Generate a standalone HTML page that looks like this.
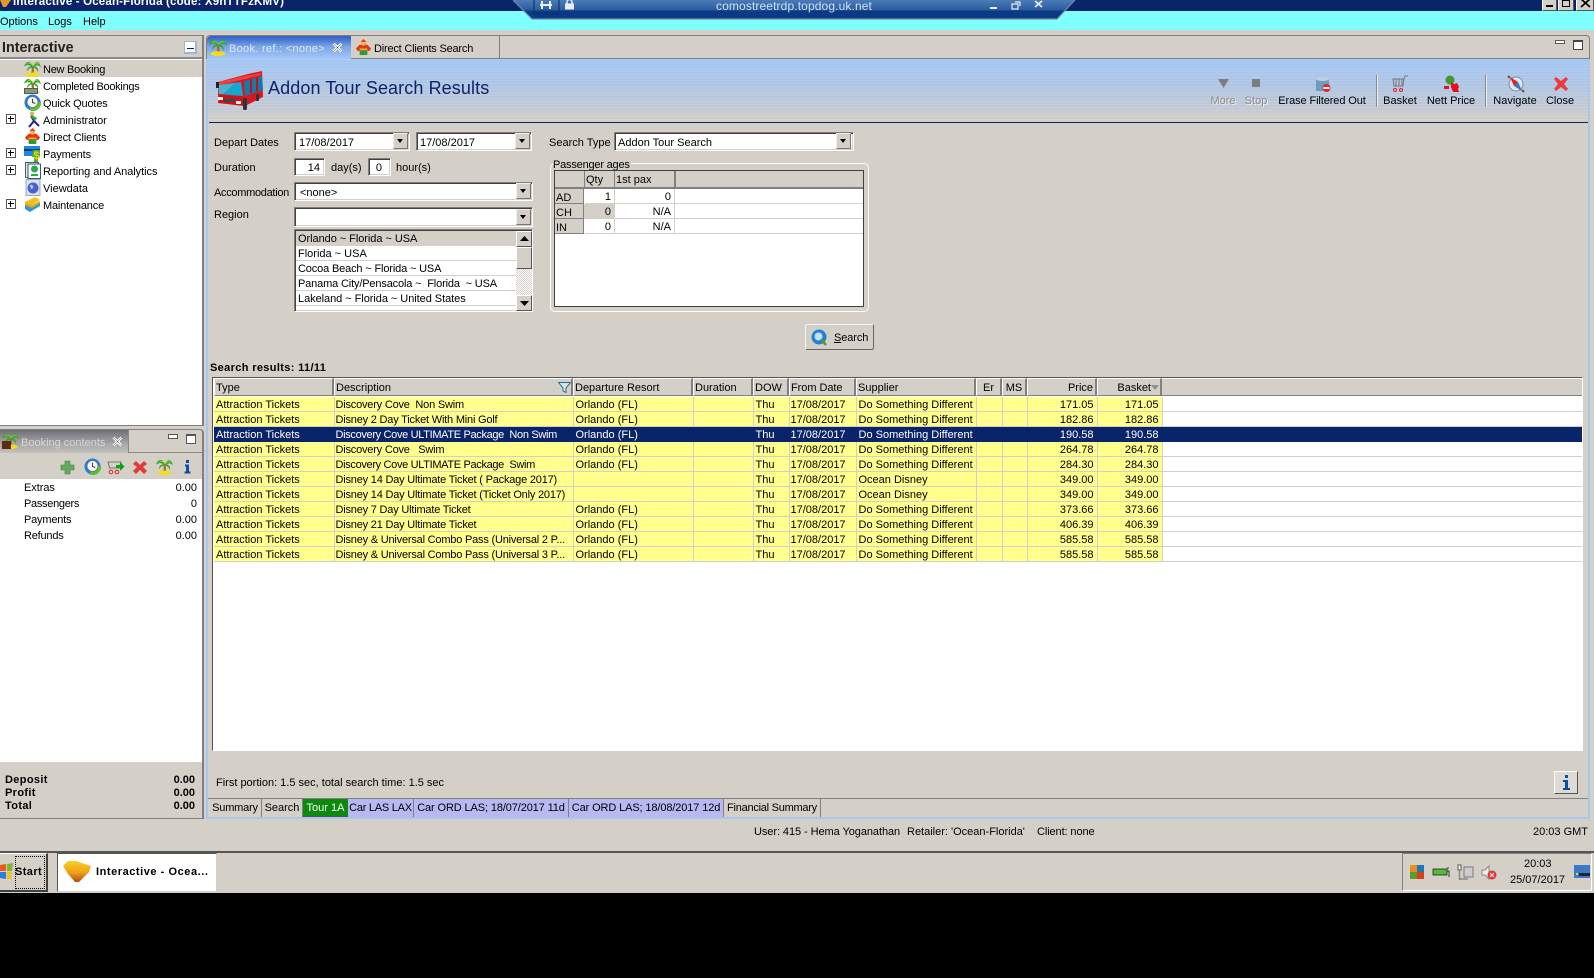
<!DOCTYPE html>
<html><head><meta charset="utf-8"><title>Interactive</title>
<style>
html,body{margin:0;padding:0;width:1594px;height:978px;overflow:hidden;background:#000}
body{position:relative;font:11px/14px "Liberation Sans",Arial,sans-serif;color:#000}
div,span,svg,table{box-sizing:border-box}
.a,.t,svg.i{position:absolute}
.t{white-space:nowrap;line-height:14px;margin-top:1px}
.in{position:absolute;background:#fff;border:1px solid;border-color:#808080 #fff #fff #808080;box-shadow:inset 1px 1px 0 #404040,inset -1px -1px 0 #d4d0c8}
.up{position:absolute;background:#d4d0c8;border:1px solid;border-color:#fff #555 #555 #fff}
.dd{position:absolute;width:15px;background:#d4d0c8;border:1px solid;border-color:#eee #777 #777 #eee}
.dd:after{content:"";position:absolute;left:3px;top:5px;border:3px solid transparent;border-top:4px solid #000;border-bottom:0}
.pl{position:absolute;left:6px;width:10px;height:10px;border:1px solid #555;background:#fff}
.pl:before{content:"";position:absolute;left:1px;top:3px;width:6px;height:1px;background:#000}
.pl:after{content:"";position:absolute;left:3px;top:1px;width:1px;height:6px;background:#000}
table{position:absolute;border-collapse:collapse;table-layout:fixed}
td{padding:2px 3px 0 2px;height:12px;line-height:12px;white-space:nowrap;overflow:hidden;border-right:1px solid #d4d0c8;border-bottom:1px solid #d4d0c8;background:#ffff8e}
td.r{text-align:right}
td.w{background:#fff;border-right:0}
td:nth-child(2){padding-left:1px;letter-spacing:-.2px}
td:nth-child(6){padding-left:1px}
td.u{letter-spacing:-.33px}
tr.s td{background:#0a246a;color:#fff;border-color:#0a246a}
.h{position:absolute;top:378px;height:18px;background:#d4d0c8;border-left:1px solid #fff;border-top:1px solid #fff;border-right:2px solid #808080;border-bottom:1px solid #808080;line-height:19px;padding-left:1px;white-space:nowrap}
.tab{position:absolute;top:799px;height:18px;line-height:19px;text-align:center;border-right:1px solid #808080;white-space:nowrap}
.tb{position:absolute;top:94px;text-align:center;transform:translateX(-50%);white-space:nowrap;line-height:14px}
</style></head><body>
<svg width="0" height="0" style="position:absolute"><defs>
<symbol id="palm" viewBox="0 0 18 18"><path d="M7.500 7C8.500 10 8.500 12 7 15L11 15C10.500 12 10.500 9 10.500 7Z" fill="#a9701e"/><path d="M9.500 7C6.500 0 2 1 0 7C3 5 5 5 7.500 6.500C5 7 3 9 3 12C5 9 7 8 9.500 7.500C11.500 8.500 14 10 15 13C15.500 9 13.500 7.500 11.500 6.500C14 5 16 5.500 18 8C16.500 1 12 0 9.500 7Z" fill="#3aa52a"/><path d="M9.500 6C7 3 5 3 3 4.500M10 6C12 3 14 3 15.500 4.500" stroke="#8fd040" fill="none" stroke-width=".8"/><ellipse cx="9" cy="15.600" rx="7.500" ry="2.300" fill="#f6dc14"/></symbol>
<symbol id="clock" viewBox="0 0 18 18"><circle cx="9" cy="9" r="8.500" fill="#1e82dc"/><path d="M7 18A9 9 0 0 0 18 8L14 9L13 12L9 14L6 13Z" fill="#5cc02e"/><circle cx="9" cy="8.500" r="5.800" fill="#f4f4f4" stroke="#667" stroke-width=".7"/><path d="M9 5V9L12 10" stroke="#333" fill="none"/></symbol>
<symbol id="gift" viewBox="0 0 18 18"><path d="M5 6H13L17 10L15 13L13 12V16H5V12L3 13L1 10Z" fill="#e8361a"/><circle cx="9" cy="4" r="3" fill="#f4b45c"/><path d="M6 3L9 0L12 3Z" fill="#e8361a"/><rect x="5" y="10" width="8" height="2" fill="#f5a623"/><rect x="5" y="12" width="8" height="5" fill="#2a9a3c"/></symbol>
</defs></svg>

<!-- Desktop background -->
<div class="a" style="left:0;top:0;width:1594px;height:893px;background:#d4d0c8"></div>
<div class="a" style="left:0;top:0;width:1594px;height:11px;background:#0a246a"></div>
<div class="a" style="left:0;top:11px;width:1594px;height:19px;background:#80ffff"></div>
<svg class="i" style="left:0;top:0" width="13" height="8" viewBox="0 0 13 8"><path d="M0 0H11L6 7H3Z" fill="#e8962a"/></svg>
<div class="t" style="left:13px;top:-6px;color:#fff;font-weight:bold;font-size:11.500px;letter-spacing:.17px">Interactive - Ocean-Florida (code: X9hTTFzKMV)</div>

<!-- RDP bar -->
<svg class="i" style="left:513px;top:0" width="563" height="20" viewBox="0 0 563 20"><defs><linearGradient id="rg" x1="0" y1="0" x2="0" y2="1"><stop offset="0" stop-color="#4a7cb8"/><stop offset=".55" stop-color="#2a5a9c"/><stop offset=".56" stop-color="#0b3a85"/><stop offset="1" stop-color="#0b3a85"/></linearGradient></defs><path d="M0 0H562L544 19H19Z" fill="url(#rg)"/><path d="M0 0L19 19H544L562 0" fill="none" stroke="#6f8ba8" stroke-width="1.200"/><rect x="21" y="-3" width="25" height="17" rx="3" fill="none" stroke="#0a2c60"/><path d="M27 5H39M29 1V9M37 1V9" stroke="#e8eef6" stroke-width="2" fill="none"/><rect x="52" y="3.500" width="9" height="6" fill="#e8eef6"/><path d="M54 4V2A2.500 2.500 0 0 1 59 2V4" stroke="#e8eef6" stroke-width="1.500" fill="none"/><rect x="477" y="7" width="7" height="2" fill="#e8eef6"/><path d="M499 4h6v5h-6zM502 2h5v4" fill="none" stroke="#e8eef6" stroke-width="1.200"/><path d="M522 1L529 7M529 1L522 7" stroke="#e8eef6" stroke-width="1.800"/></svg>
<div class="t" style="left:716px;top:-2px;color:#cfe0f2;font-size:12px;letter-spacing:.12px">comostreetrdp.topdog.uk.net</div>

<!-- Window buttons -->
<div class="up" style="left:1542px;top:-4px;width:15px;height:15px"><div class="a" style="left:3px;top:8px;width:7px;height:2px;background:#000"></div></div>
<div class="up" style="left:1558px;top:-4px;width:16px;height:15px"><div class="a" style="left:3px;top:3px;width:8px;height:7px;border:1px solid #000"></div></div>
<div class="up" style="left:1576px;top:-4px;width:18px;height:15px"><svg class="i" style="left:3px;top:2px" width="11" height="9"><path d="M1 0L10 8M10 0L1 8" stroke="#000" stroke-width="1.700"/></svg></div>

<!-- Menu -->
<div class="t" style="left:0;top:14px">Options</div>
<div class="t" style="left:48px;top:14px">Logs</div>
<div class="t" style="left:83px;top:14px">Help</div>

<!-- Left nav panel -->
<div class="a" style="left:0;top:35px;width:204px;height:391px;border-top:1px solid #808080;border-right:2px solid #808080;border-bottom:1px solid #808080;background:#fff"></div>
<div class="a" style="left:0;top:36px;width:202px;height:23px;background:#d4d0c8;border-bottom:2px solid #8a8a8a"></div>
<div class="t" style="left:2px;top:40px;font-size:14.300px;font-weight:bold;color:#222">Interactive</div>
<div class="a" style="left:184px;top:41px;width:13px;height:13px;background:#fff;border:2px solid #9cb4d8;border-width:1px 2px 2px 1px"></div>
<div class="a" style="left:187px;top:48px;width:7px;height:1px;background:#0a246a"></div>
<div class="a" style="left:0;top:60px;width:202px;height:17px;background:#d4d0c8"></div>
<svg class="i" style="left:24px;top:60px" width="17" height="17"><use href="#palm"/></svg>
<svg class="i" style="left:24px;top:77px" width="17" height="17"><use href="#palm"/></svg>
<div class="a" style="left:24px;top:88px;width:14px;height:6px;background:#8a9a70;border:1px solid #556"></div>
<svg class="i" style="left:24px;top:94px" width="17" height="17"><use href="#clock"/></svg>
<svg class="i" style="left:26px;top:111px" width="15" height="17" viewBox="0 0 15 17"><circle cx="6" cy="2.500" r="2" fill="#e8a860"/><path d="M5 5L8 10L3 16M8 10L13 15" stroke="#20209a" stroke-width="2" fill="none"/><path d="M4 5L9 10L11 7L6 4Z" fill="#3aa83a"/></svg>
<svg class="i" style="left:24px;top:128px" width="17" height="17"><use href="#gift"/></svg>
<svg class="i" style="left:24px;top:145px" width="17" height="17" viewBox="0 0 17 17"><rect x="0" y="1" width="16" height="10" fill="#1f86e0"/><rect x="0" y="4" width="16" height="2" fill="#0c3a80"/><path d="M9 5h7v7h-2v5h-4v-5H8z" fill="#48b02c"/><text x="9.500" y="14" font-size="11" font-weight="bold" fill="#f0d020" font-family="Liberation Sans">$</text></svg>
<svg class="i" style="left:25px;top:162px" width="16" height="17" viewBox="0 0 16 17"><rect x=".5" y="0.500" width="13" height="15" fill="#dfe8e8" stroke="#3a6a6a"/><rect x="3" y="2" width="12.500" height="14.500" fill="#fff" stroke="#3a5a6a"/><circle cx="9.500" cy="7" r="3.500" fill="#2ea84a"/><rect x="6" y="12" width="7" height="2" fill="#2ea84a"/></svg>
<svg class="i" style="left:25px;top:179px" width="16" height="17" viewBox="0 0 16 17"><rect x="1" y="0.500" width="14" height="16" fill="#dde2ee" stroke="#9ab"/><circle cx="8" cy="9" r="5.500" fill="#4a60d0"/><path d="M5 6C7 5 9 7 8 9S5 10 5 6Z" fill="#a0d0f0"/></svg>
<svg class="i" style="left:24px;top:196px" width="17" height="17" viewBox="0 0 17 17"><path d="M1 9L9 11L16 6V10L6 16L1 13Z" fill="#2a9ae0"/><path d="M1 6L11 1L16 4L8 9Z" fill="#f4c020"/><path d="M1 9L8 12L16 7V5L8 9L1 6Z" fill="#e8a810"/></svg>
<div class="t" style="left:43px;top:62px;letter-spacing:-.25px">New Booking</div>
<div class="t" style="left:43px;top:79px;letter-spacing:-.28px">Completed Bookings</div>
<div class="t" style="left:43px;top:96px;letter-spacing:-.17px">Quick Quotes</div>
<div class="t" style="left:43px;top:113px;letter-spacing:-.08px">Administrator</div>
<div class="t" style="left:43px;top:130px;letter-spacing:-.15px">Direct Clients</div>
<div class="t" style="left:43px;top:147px;letter-spacing:-.12px">Payments</div>
<div class="t" style="left:43px;top:164px;letter-spacing:-.05px">Reporting and Analytics</div>
<div class="t" style="left:43px;top:181px">Viewdata</div>
<div class="t" style="left:43px;top:198px;letter-spacing:-.18px">Maintenance</div>
<div class="pl" style="top:114px"></div><div class="pl" style="top:148px"></div><div class="pl" style="top:165px"></div><div class="pl" style="top:199px"></div>

<!-- Booking contents panel -->
<div class="a" style="left:0;top:429px;width:204px;height:390px;border-top:1px solid #808080;border-right:2px solid #808080;border-bottom:1px solid #808080;border-radius:0 4px 0 0"></div>
<div class="a" style="left:0;top:430px;width:129px;height:23px;background:linear-gradient(#6f6f78,#a8a6a6 60%,#c4c2be);border-right:1px solid #888"></div>
<div class="a" style="left:129px;top:452px;width:73px;height:1px;background:#888"></div>
<svg class="i" style="left:2px;top:432px" width="17" height="17"><use href="#palm"/></svg>
<div class="a" style="left:2px;top:441px;width:9px;height:8px;background:#5a2c10"></div>
<div class="t" style="left:21px;top:435px;color:#d8d8d8">Booking contents</div>
<svg class="i" style="left:112px;top:436px" width="11" height="11"><path d="M1.500 1.500L9.500 9.500M9.500 1.500L1.500 9.500" stroke="#fff" stroke-width="2.600"/><path d="M1.500 1.500L9.500 9.500M9.500 1.500L1.500 9.500" stroke="#444" stroke-width=".5"/></svg>
<div class="a" style="left:168px;top:434px;width:10px;height:5px;background:#fff;border:1px solid #555"></div>
<div class="a" style="left:186px;top:434px;width:10px;height:10px;background:#fff;border:1px solid #555;border-top-width:2px"></div>
<div class="a" style="left:0;top:479px;width:202px;height:283px;background:#fff"></div>
<svg class="i" style="left:0;top:456px" width="202" height="22" viewBox="0 0 202 22"><path d="M65 5h5v4h4v5h-4v4h-5v-4h-4v-5h4z" fill="#68a860" stroke="#3f8040" stroke-width=".6"/><use href="#clock" x="84" y="2" width="17" height="17"/><path d="M108 6h13l-1.500 6h-10z" fill="none" stroke="#777"/><circle cx="111" cy="16" r="1.800" fill="none" stroke="#d22"/><circle cx="117" cy="16" r="1.800" fill="none" stroke="#d22"/><path d="M116 9h4v-3l4.500 4.500-4.500 4.500v-3h-4z" fill="#12a012"/><path d="M136 5l4 4 4-4 3 3-4 3 4 4-3 3-4-4-4 4-3-3 4-4-4-3z" fill="#e03a3a"/><use href="#palm" x="156" y="2" width="17" height="17"/><path d="M186 4h3v3h-3zM185 8.500h4v7h1.500v2h-6v-2h1.500v-5h-1z" fill="#0a50a0"/></svg>
<div class="t" style="left:24px;top:480px;letter-spacing:-.05px">Extras</div><div class="t" style="right:1397px;top:480px">0.00</div>
<div class="t" style="left:24px;top:496px;letter-spacing:-.3px">Passengers</div><div class="t" style="right:1397px;top:496px">0</div>
<div class="t" style="left:24px;top:512px;letter-spacing:-.2px">Payments</div><div class="t" style="right:1397px;top:512px">0.00</div>
<div class="t" style="left:24px;top:528px;letter-spacing:-.2px">Refunds</div><div class="t" style="right:1397px;top:528px">0.00</div>
<div class="t" style="left:5px;top:772px;font-weight:bold;letter-spacing:.35px">Deposit</div><div class="t" style="right:1399px;top:772px;font-weight:bold">0.00</div>
<div class="t" style="left:5px;top:785px;font-weight:bold;letter-spacing:.35px">Profit</div><div class="t" style="right:1399px;top:785px;font-weight:bold">0.00</div>
<div class="t" style="left:5px;top:798px;font-weight:bold;letter-spacing:.35px">Total</div><div class="t" style="right:1399px;top:798px;font-weight:bold">0.00</div>

<!-- Main panel -->
<div class="a" style="left:206px;top:35px;width:1384px;height:24px;border-top:1px solid #808080;border-right:1px solid #808080;border-left:1px solid #808080;border-bottom:1px solid #808080;border-radius:4px 4px 0 0"></div>
<div class="a" style="left:206px;top:59px;width:1384px;height:760px;border:2px solid #a6c8f0;border-top:0"></div>
<div class="a" style="left:207px;top:36px;width:144px;height:24px;background:linear-gradient(#2e5cc4,#7aa6ea 45%,#a8caf6);border-radius:4px 0 0 0"></div>
<svg class="i" style="left:209px;top:38px" width="18" height="18"><use href="#palm"/></svg>
<div class="t" style="left:229px;top:41px;color:#dce8f8;letter-spacing:.3px">Book. ref.: &lt;none&gt;</div>
<svg class="i" style="left:332px;top:42px" width="11" height="11"><path d="M1.500 1.500L9.500 9.500M9.500 1.500L1.500 9.500" stroke="#fff" stroke-width="2.600"/><path d="M1.500 1.500L9.500 9.500M9.500 1.500L1.500 9.500" stroke="#444" stroke-width=".5"/></svg>
<svg class="i" style="left:355px;top:39px" width="17" height="17"><use href="#gift"/></svg>
<div class="t" style="left:374px;top:41px;letter-spacing:-.2px">Direct Clients Search</div>
<div class="a" style="left:499px;top:36px;width:1px;height:23px;background:#808080"></div>
<div class="a" style="left:1555px;top:40px;width:10px;height:4px;background:#fff;border:1px solid #555"></div>
<div class="a" style="left:1573px;top:40px;width:10px;height:10px;background:#fff;border:1px solid #444;border-top-width:2px"></div>

<!-- Banner -->
<div class="a" style="left:208px;top:59px;width:1380px;height:63px;background:repeating-linear-gradient(rgba(255,255,255,.05) 0 1px,rgba(0,0,0,.015) 1px 3px),linear-gradient(#a6caf8,#b2c8e8 40%,#c4ccd8 75%,#d6d0ca)"></div>
<div class="a" style="left:209px;top:122px;width:1379px;height:1px;background:#0a246a"></div>
<svg class="i" style="left:215px;top:70px" width="49" height="41" viewBox="0 0 49 41"><path d="M3 12L33 4L47 1L48 27L30 36L3 29Z" fill="#d8181e"/><path d="M4 12L30 6L46 3L46 5L30 9L4 15Z" fill="#f04040"/><path d="M3 15L26 12L28 26L4 24Z" fill="#14a8d0"/><path d="M3 15L20 13L8 24L4 24Z" fill="#50b0c8"/><path d="M29 11L47 6L48 20L30 26Z" fill="#1878a8"/><path d="M36 9v14M42 7v14" stroke="#c01418" stroke-width="2"/><path d="M4 25L28 27L29 36L3 33Z" fill="#c81418"/><rect x="3" y="27" width="5" height="3" fill="#eee"/><rect x="21" y="31" width="5" height="3" fill="#eee"/><rect x="9" y="29" width="11" height="3" fill="#444"/><rect x="28" y="28" width="4" height="12" rx="1.500" fill="#333"/><rect x="41" y="24" width="3" height="7" rx="1" fill="#333"/><rect x="1" y="12" width="3" height="6" fill="#222"/></svg>
<div class="t" style="left:268px;top:79px;height:16px;line-height:16px;font-size:18px;color:#0a246a;letter-spacing:.1px">Addon Tour Search Results</div>

<!-- Toolbar -->
<svg class="i" style="left:1210px;top:73px" width="370" height="20" viewBox="1210 73 370 20"><path d="M1218 79h11l-5.500 9z" fill="#7d7d7d"/><rect x="1252" y="79" width="8" height="8" fill="#7d7d7d"/><path d="M1316 79h13v12h-13z" fill="#6c9cc0"/><ellipse cx="1322.500" cy="79" rx="6.500" ry="2" fill="#c0d0dc"/><circle cx="1326.500" cy="88" r="4" fill="#e22"/><rect x="1323.500" y="87" width="6" height="2" fill="#fff"/><path d="M1393 79h11l-1 7h-9zM1404 79l1-3h3" fill="none" stroke="#777"/><path d="M1396 79v7M1399 79v7M1402 79v7" stroke="#777"/><circle cx="1395" cy="90" r="1.500" fill="none" stroke="#d22"/><circle cx="1401" cy="90" r="1.500" fill="none" stroke="#d22"/><circle cx="1450" cy="80" r="4.500" fill="#3e9a2a"/><path d="M1444 86h5v3h-5zM1451 82l3 2 3-1 2 4-1 2 1 3h-6l-2-5z" fill="#e8101c"/><circle cx="1516" cy="84" r="7" fill="#dde8f4" stroke="#889"/><path d="M1510 77L1518 82L1514 86Z" fill="#d22"/><path d="M1522 91L1514 86L1518 82Z" fill="#3a70c0"/><path d="M1508 76l2 2M1522 90l2 2" stroke="#654" stroke-width="2"/><path d="M1554 79l2-2 5 4 5-4 2 2-4 5 4 5-2 2-5-4-5 4-2-2 4-5z" fill="#ee3a3a"/></svg>
<div class="a" style="left:1376px;top:75px;width:1px;height:32px;background:#8a8a8a;box-shadow:1px 0 0 #eee"></div>
<div class="a" style="left:1485px;top:75px;width:1px;height:32px;background:#8a8a8a;box-shadow:1px 0 0 #eee"></div>
<div class="tb" style="left:1223px;color:#8a8a8a;text-shadow:1px 1px 0 #f0f0f0">More</div>
<div class="tb" style="left:1256px;color:#8a8a8a;text-shadow:1px 1px 0 #f0f0f0">Stop</div>
<div class="tb" style="left:1322px;letter-spacing:-.1px">Erase Filtered Out</div>
<div class="tb" style="left:1400px">Basket</div>
<div class="tb" style="left:1451px">Nett Price</div>
<div class="tb" style="left:1515px">Navigate</div>
<div class="tb" style="left:1560px">Close</div>

<!-- Form -->
<div class="t" style="left:214px;top:135px">Depart Dates</div>
<div class="in" style="left:294px;top:132px;width:116px;height:19px"></div><div class="t" style="left:299px;top:135px">17/08/2017</div><div class="dd" style="left:393px;top:133px;height:16px"></div>
<div class="in" style="left:416px;top:132px;width:116px;height:19px"></div><div class="t" style="left:420px;top:135px">17/08/2017</div><div class="dd" style="left:515px;top:133px;height:16px"></div>
<div class="t" style="left:214px;top:160px">Duration</div>
<div class="in" style="left:294px;top:158px;width:31px;height:18px"></div><div class="t" style="right:1274px;top:160px">14</div>
<div class="t" style="left:331px;top:160px">day(s)</div>
<div class="in" style="left:368px;top:158px;width:23px;height:18px"></div><div class="t" style="right:1212px;top:160px">0</div>
<div class="t" style="left:396px;top:160px">hour(s)</div>
<div class="t" style="left:214px;top:185px;letter-spacing:-.3px">Accommodation</div>
<div class="in" style="left:294px;top:182px;width:239px;height:19px"></div><div class="t" style="left:300px;top:185px">&lt;none&gt;</div><div class="dd" style="left:516px;top:183px;height:16px"></div>
<div class="t" style="left:214px;top:207px">Region</div>
<div class="in" style="left:294px;top:207px;width:239px;height:20px"></div><div class="dd" style="left:516px;top:209px;height:16px"></div>
<div class="in" style="left:294px;top:229px;width:239px;height:83px;overflow:hidden"></div>
<div class="a" style="left:296px;top:231px;width:220px;height:15px;background:#d4d0c8"></div>
<div class="a" style="left:296px;top:260px;width:220px;height:1px;background:#d4d0c8"></div>
<div class="a" style="left:296px;top:275px;width:220px;height:1px;background:#d4d0c8"></div>
<div class="a" style="left:296px;top:290px;width:220px;height:1px;background:#d4d0c8"></div>
<div class="a" style="left:296px;top:305px;width:220px;height:1px;background:#d4d0c8"></div>
<div class="t" style="left:298px;top:231px;letter-spacing:-.05px">Orlando ~ Florida ~ USA</div>
<div class="t" style="left:298px;top:246px">Florida ~ USA</div>
<div class="t" style="left:298px;top:261px;letter-spacing:-.15px">Cocoa Beach ~ Florida ~ USA</div>
<div class="t" style="left:298px;top:276px;letter-spacing:-.15px">Panama City/Pensacola ~ &nbsp;Florida &nbsp;~ USA</div>
<div class="t" style="left:298px;top:291px;letter-spacing:-.05px">Lakeland ~ Florida ~ United States</div>
<div class="a" style="left:516px;top:231px;width:16px;height:80px;background:repeating-conic-gradient(#d4d0c8 0 25%,#fff 0 50%) 0 0/2px 2px"></div>
<div class="up" style="left:516px;top:231px;width:16px;height:16px"><svg class="i" style="left:3px;top:4px" width="9" height="6"><path d="M4.500 0L9 5H0Z"/></svg></div>
<div class="up" style="left:516px;top:247px;width:16px;height:22px"></div>
<div class="up" style="left:516px;top:295px;width:16px;height:16px"><svg class="i" style="left:3px;top:5px" width="9" height="6"><path d="M0 0H9L4.500 5Z"/></svg></div>

<div class="t" style="left:549px;top:135px">Search Type</div>
<div class="in" style="left:614px;top:132px;width:240px;height:19px"></div><div class="t" style="left:618px;top:135px">Addon Tour Search</div><div class="dd" style="left:836px;top:133px;height:16px"></div>

<!-- Passenger ages -->
<div class="a" style="left:550px;top:163px;width:319px;height:149px;border:1px solid #fff;border-radius:5px"></div>
<div class="t" style="left:553px;top:157px;background:#d4d0c8;padding-right:1px;letter-spacing:-.2px">Passenger ages</div>
<div class="a" style="left:554px;top:170px;width:310px;height:137px;background:#fff;border:1px solid #404040"></div>
<div class="a" style="left:555px;top:171px;width:308px;height:18px;background:#d4d0c8;border-bottom:2px solid #808080"></div>
<div class="a" style="left:584px;top:171px;width:1px;height:17px;background:#808080"></div>
<div class="a" style="left:614px;top:171px;width:1px;height:17px;background:#808080"></div>
<div class="a" style="left:674px;top:171px;width:2px;height:17px;background:#808080"></div>
<div class="t" style="left:586px;top:172px">Qty</div><div class="t" style="left:616px;top:172px">1st pax</div>
<div class="a" style="left:555px;top:189px;width:29px;height:15px;background:#d4d0c8;border-bottom:1px solid #808080;border-right:1px solid #808080"></div>
<div class="a" style="left:555px;top:204px;width:29px;height:15px;background:#d4d0c8;border-bottom:1px solid #808080;border-right:1px solid #808080"></div>
<div class="a" style="left:555px;top:219px;width:29px;height:15px;background:#d4d0c8;border-bottom:1px solid #808080;border-right:1px solid #808080"></div>
<div class="a" style="left:584px;top:204px;width:30px;height:15px;background:#d4d0c8"></div>
<div class="a" style="left:585px;top:203px;width:278px;height:1px;background:#d4d0c8"></div>
<div class="a" style="left:585px;top:218px;width:278px;height:1px;background:#d4d0c8"></div>
<div class="a" style="left:585px;top:233px;width:278px;height:1px;background:#d4d0c8"></div>
<div class="a" style="left:614px;top:189px;width:1px;height:45px;background:#d4d0c8"></div>
<div class="a" style="left:674px;top:189px;width:1px;height:45px;background:#d4d0c8"></div>
<div class="t" style="left:556px;top:190px">AD</div><div class="t" style="left:556px;top:205px">CH</div><div class="t" style="left:556px;top:220px">IN</div>
<div class="t" style="right:983px;top:189px">1</div><div class="t" style="right:983px;top:204px">0</div><div class="t" style="right:983px;top:219px">0</div>
<div class="t" style="right:923px;top:189px">0</div><div class="t" style="right:923px;top:204px">N/A</div><div class="t" style="right:923px;top:219px">N/A</div>

<!-- Search button -->
<div class="a" style="left:805px;top:324px;width:69px;height:26px;border:1px solid;border-color:#f4f4f4 #666 #666 #f4f4f4;border-radius:2px"></div>
<svg class="i" style="left:811px;top:329px" width="17" height="17" viewBox="0 0 17 17"><circle cx="8" cy="8" r="7.500" fill="#1e82dc"/><circle cx="7.500" cy="7.500" r="4" fill="#c8e0e8"/><path d="M10 10L15 16" stroke="#5a9a20" stroke-width="2.500"/></svg>
<div class="t" style="left:834px;top:330px;letter-spacing:-.1px"><u style="text-decoration-thickness:1px">S</u>earch</div>

<!-- Results -->
<div class="t" style="left:210px;top:360px;font-weight:bold;letter-spacing:.35px">Search results: 11/11</div>
<div class="a" style="left:212px;top:377px;width:1371px;height:374px;background:#fff;border:1px solid #555;border-color:#555 #fff #fff #555"></div>
<div class="a" style="left:214px;top:378px;width:1368px;height:18px;background:#d4d0c8;border-top:1px solid #fff;border-bottom:1px solid #808080"></div>
<div class="h" style="left:214px;width:120px">Type</div>
<div class="h" style="left:334px;width:239px">Description</div>
<div class="h" style="left:573px;width:120px">Departure Resort</div>
<div class="h" style="left:693px;width:60px">Duration</div>
<div class="h" style="left:753px;width:36px">DOW</div>
<div class="h" style="left:789px;width:67px;letter-spacing:-.05px">From Date</div>
<div class="h" style="left:856px;width:120px">Supplier</div>
<div class="h" style="left:976px;width:26px;text-align:center;padding:0">Er</div>
<div class="h" style="left:1002px;width:25px;text-align:center;padding:0">MS</div>
<div class="h" style="left:1027px;width:70px;text-align:right;padding-right:2px">Price</div>
<div class="h" style="left:1097px;width:65px;text-align:right;padding-right:9px">Basket</div>
<svg class="i" style="left:558px;top:382px" width="13" height="11"><path d="M.5 .5H12.500L8 6V10.500L5 9V6Z" fill="#d4e4f0" stroke="#2a6a90"/></svg>
<svg class="i" style="left:1151px;top:385px" width="8" height="5"><path d="M0 0H8L4 5Z" fill="#909090"/></svg>

<table style="left:214px;top:397px;width:1368px">
<colgroup><col style="width:120px"><col style="width:239px"><col style="width:120px"><col style="width:60px"><col style="width:36px"><col style="width:67px"><col style="width:120px"><col style="width:26px"><col style="width:25px"><col style="width:70px"><col style="width:65px"><col style="width:420px"></colgroup>
<tr><td>Attraction Tickets</td><td>Discovery Cove &nbsp;Non Swim</td><td>Orlando (FL)</td><td></td><td>Thu</td><td>17/08/2017</td><td>Do Something Different</td><td></td><td></td><td class="r">171.05</td><td class="r">171.05</td><td class="w"></td></tr>
<tr><td>Attraction Tickets</td><td>Disney 2 Day Ticket With Mini Golf</td><td>Orlando (FL)</td><td></td><td>Thu</td><td>17/08/2017</td><td>Do Something Different</td><td></td><td></td><td class="r">182.86</td><td class="r">182.86</td><td class="w"></td></tr>
<tr class="s"><td>Attraction Tickets</td><td class="u">Discovery Cove ULTIMATE Package &nbsp;Non Swim</td><td>Orlando (FL)</td><td></td><td>Thu</td><td>17/08/2017</td><td>Do Something Different</td><td></td><td></td><td class="r">190.58</td><td class="r">190.58</td><td class="w"></td></tr>
<tr><td>Attraction Tickets</td><td>Discovery Cove &nbsp; Swim</td><td>Orlando (FL)</td><td></td><td>Thu</td><td>17/08/2017</td><td>Do Something Different</td><td></td><td></td><td class="r">264.78</td><td class="r">264.78</td><td class="w"></td></tr>
<tr><td>Attraction Tickets</td><td class="u">Discovery Cove ULTIMATE Package &nbsp;Swim</td><td>Orlando (FL)</td><td></td><td>Thu</td><td>17/08/2017</td><td>Do Something Different</td><td></td><td></td><td class="r">284.30</td><td class="r">284.30</td><td class="w"></td></tr>
<tr><td>Attraction Tickets</td><td>Disney 14 Day Ultimate Ticket ( Package 2017)</td><td></td><td></td><td>Thu</td><td>17/08/2017</td><td>Ocean Disney</td><td></td><td></td><td class="r">349.00</td><td class="r">349.00</td><td class="w"></td></tr>
<tr><td>Attraction Tickets</td><td>Disney 14 Day Ultimate Ticket (Ticket Only 2017)</td><td></td><td></td><td>Thu</td><td>17/08/2017</td><td>Ocean Disney</td><td></td><td></td><td class="r">349.00</td><td class="r">349.00</td><td class="w"></td></tr>
<tr><td>Attraction Tickets</td><td>Disney 7 Day Ultimate Ticket</td><td>Orlando (FL)</td><td></td><td>Thu</td><td>17/08/2017</td><td>Do Something Different</td><td></td><td></td><td class="r">373.66</td><td class="r">373.66</td><td class="w"></td></tr>
<tr><td>Attraction Tickets</td><td>Disney 21 Day Ultimate Ticket</td><td>Orlando (FL)</td><td></td><td>Thu</td><td>17/08/2017</td><td>Do Something Different</td><td></td><td></td><td class="r">406.39</td><td class="r">406.39</td><td class="w"></td></tr>
<tr><td>Attraction Tickets</td><td>Disney &amp; Universal Combo Pass (Universal 2 P...</td><td>Orlando (FL)</td><td></td><td>Thu</td><td>17/08/2017</td><td>Do Something Different</td><td></td><td></td><td class="r">585.58</td><td class="r">585.58</td><td class="w"></td></tr>
<tr><td>Attraction Tickets</td><td>Disney &amp; Universal Combo Pass (Universal 3 P...</td><td>Orlando (FL)</td><td></td><td>Thu</td><td>17/08/2017</td><td>Do Something Different</td><td></td><td></td><td class="r">585.58</td><td class="r">585.58</td><td class="w"></td></tr>
</table>

<!-- Status area -->
<div class="t" style="left:216px;top:775px">First portion: 1.5 sec, total search time: 1.5 sec</div>
<div class="up" style="left:1554px;top:771px;width:24px;height:23px;background:#dedad4"><svg class="i" style="left:7px;top:3px" width="9" height="15" viewBox="0 0 9 15"><path d="M3 0h3v3H3zM1 5h5v8h2v2H1v-2h2V7H1z" fill="#0a50a0"/></svg></div>
<div class="a" style="left:208px;top:798px;width:1380px;height:1px;background:#808080"></div>
<div class="tab" style="left:208px;width:54px;letter-spacing:-.2px;padding-left:1px">Summary</div>
<div class="tab" style="left:262px;width:41px">Search</div>
<div class="tab" style="left:303px;width:45px;background:#0c8a0c;color:#fff;border-right:0;border-bottom:1px solid #555">Tour 1A</div>
<div class="tab" style="left:348px;width:66px;background:#b8b8f2;letter-spacing:-.25px">Car LAS LAX</div>
<div class="tab" style="left:414px;width:155px;background:#b8b8f2;letter-spacing:-.12px">Car ORD LAS; 18/07/2017 11d</div>
<div class="tab" style="left:569px;width:155px;background:#b8b8f2;letter-spacing:-.12px">Car ORD LAS; 18/08/2017 12d</div>
<div class="tab" style="left:724px;width:97px;letter-spacing:-.25px">Financial Summary</div>

<!-- Status bar -->
<div class="t" style="left:754px;top:824px;letter-spacing:-.07px">User: 415 - Hema Yoganathan</div>
<div class="t" style="left:907px;top:824px">Retailer: 'Ocean-Florida'</div>
<div class="t" style="left:1037px;top:824px;letter-spacing:-.1px">Client: none</div>
<div class="t" style="left:1533px;top:824px">20:03 GMT</div>

<!-- Taskbar -->
<div class="a" style="left:0;top:851px;width:1594px;height:2px;background:#555"></div>
<div class="a" style="left:0;top:853px;width:48px;height:39px;border-right:2px solid #404040;border-bottom:2px solid #404040;border-top:1px solid #fff"></div>
<svg class="i" style="left:0;top:863px" width="14" height="17" viewBox="0 0 14 17"><path d="M0 2L6 1V8H0Z" fill="#e85a20"/><path d="M7 1L13 0L12 8H7Z" fill="#7ab82a"/><path d="M0 9H6V16L0 15Z" fill="#2a80d8"/><path d="M7 9H12L11 16L7 16Z" fill="#f4c020"/></svg>
<div class="a" style="left:15px;top:856px;width:30px;height:33px;border:1px dotted #000"></div>
<div class="t" style="left:15px;top:864px;font-weight:bold;letter-spacing:.4px">Start</div>
<div class="a" style="left:57px;top:853px;width:160px;height:39px;background:#fff;border:1px solid;border-color:#555 #d4d0c8 #d4d0c8 #555"></div>
<svg class="i" style="left:62px;top:860px" width="30" height="24" viewBox="0 0 30 24"><defs><linearGradient id="og" x1="0" y1="0" x2="0" y2="1"><stop offset="0" stop-color="#f8d020"/><stop offset=".55" stop-color="#f0a018"/><stop offset="1" stop-color="#b84a10"/></linearGradient></defs><path d="M1 6L6 1H14L29 6L27 12L17 22H13L6 14Z" fill="url(#og)"/></svg>
<div class="t" style="left:96px;top:864px;font-weight:bold;letter-spacing:.55px">Interactive - Ocea...</div>
<div class="a" style="left:1402px;top:853px;width:190px;height:38px;border:1px solid;border-color:#808080 #fff #fff #808080"></div>
<svg class="i" style="left:1408px;top:864px" width="140" height="18" viewBox="1408 864 140 18"><rect x="1410" y="865" width="7" height="7" fill="#e89020"/><rect x="1417" y="865" width="7" height="7" fill="#1a7ab8"/><rect x="1410" y="872" width="7" height="7" fill="#5a9a30"/><rect x="1417" y="872" width="7" height="7" fill="#d8401c"/><rect x="1433" y="869" width="14" height="6" fill="#50c030" stroke="#222" stroke-width=".8"/><path d="M1447 868h2M1447 871h2v6" stroke="#333" fill="none"/><rect x="1464" y="867" width="9" height="10" fill="#ccc" stroke="#777"/><rect x="1458" y="865" width="3" height="5" fill="#fff" stroke="#555"/><path d="M1459.500 870v10M1459 879h9" stroke="#888" stroke-width="1.500"/><path d="M1482 870h3l4-4v13l-4-4h-3z" fill="#eee" stroke="#888"/><circle cx="1492" cy="875" r="4.500" fill="#e83030"/><path d="M1490 873l4 4M1494 873l-4 4" stroke="#fff"/></svg>
<div class="t" style="left:1524px;top:856px">20:03</div>
<div class="t" style="left:1510px;top:872px">25/07/2017</div>
<svg class="i" style="left:1574px;top:865px" width="16" height="14" viewBox="0 0 16 14"><rect width="16" height="13" fill="#3a7ac8"/><rect y="8" x="5" width="11" height="3" fill="#223"/><rect x="2" y="8" width="2" height="2" fill="#e8d040"/></svg>
</body></html>
